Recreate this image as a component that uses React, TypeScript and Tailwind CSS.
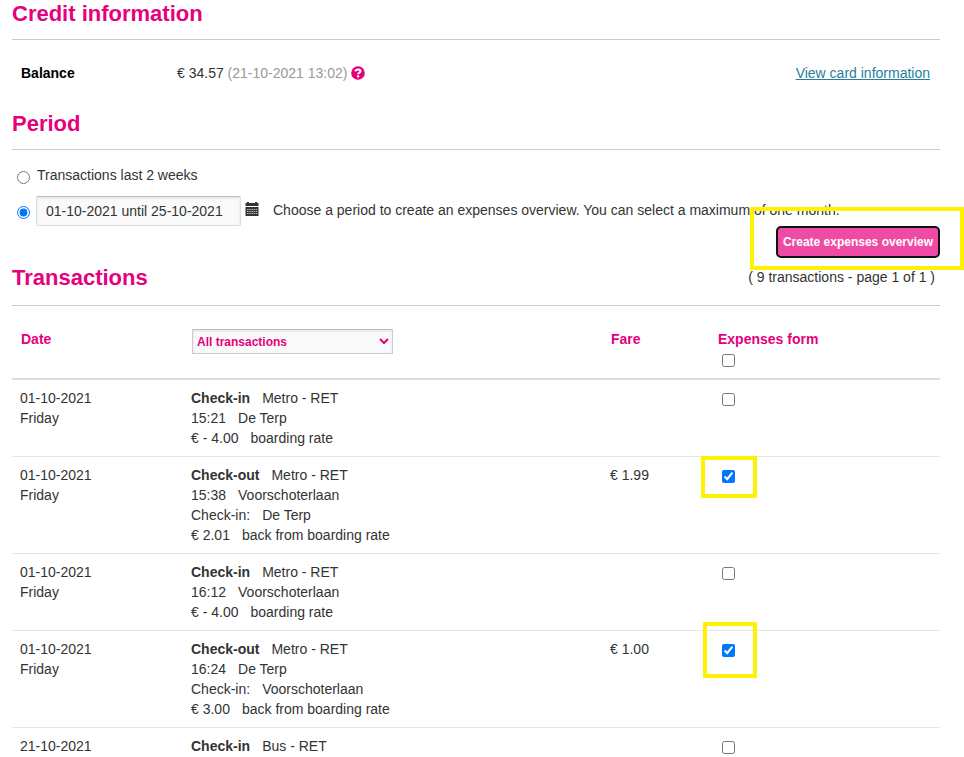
import { useState } from 'react';

type Transaction = {
  date: string;
  day?: string;
  kind: string;
  carrier: string;
  lines: [string, string][];
  fare?: string;
  mark?: string;
};

const transactions: Transaction[] = [
  {
    date: '01-10-2021',
    day: 'Friday',
    kind: 'Check-in',
    carrier: 'Metro - RET',
    lines: [['15:21', 'De Terp'], ['€ - 4.00', 'boarding rate']],
  },
  {
    date: '01-10-2021',
    day: 'Friday',
    kind: 'Check-out',
    carrier: 'Metro - RET',
    lines: [['15:38', 'Voorschoterlaan'], ['Check-in:', 'De Terp'], ['€ 2.01', 'back from boarding rate']],
    fare: '€ 1.99',
    mark: '-top-[14px] -bottom-[15px] -left-[21px] -right-[22px]',
  },
  {
    date: '01-10-2021',
    day: 'Friday',
    kind: 'Check-in',
    carrier: 'Metro - RET',
    lines: [['16:12', 'Voorschoterlaan'], ['€ - 4.00', 'boarding rate']],
  },
  {
    date: '01-10-2021',
    day: 'Friday',
    kind: 'Check-out',
    carrier: 'Metro - RET',
    lines: [['16:24', 'De Terp'], ['Check-in:', 'Voorschoterlaan'], ['€ 3.00', 'back from boarding rate']],
    fare: '€ 1.00',
    mark: '-top-[22px] -bottom-[21px] -left-[19px] -right-[22px]',
  },
  { date: '21-10-2021', kind: 'Check-in', carrier: 'Bus - RET', lines: [] },
];

function Marker({ className }: { className: string }) {
  return <span className={`absolute border-4 border-[#fff200] pointer-events-none ${className}`} />;
}

function HelpIcon() {
  return (
    <svg viewBox="0 0 14 14" className="w-[14px] h-[14px]" role="img" aria-label="Help">
      <circle cx="7" cy="7" r="6.8" fill="#e5007d" />
      <path d="M4.4 5.4C4.6 3.900 5.600 3.400 7 3.400c1.600 0 2.500.7 2.500 1.800 0 1.600-2.400 1.500-2.400 3.100" fill="none" stroke="#fff" strokeWidth="2" />
      <path d="M6 9.300h2.200v2.100H6z" fill="#fff" />
    </svg>
  );
}

function CalendarIcon() {
  return (
    <svg viewBox="0 0 14 14" className="w-[14px] h-[14px]" aria-hidden="true">
      <path d="M.5 1H2V0h2v1h6V0h2v1h1.500v3H.5z" fill="#333" />
      <path d="M.5 5h13v9H.5z" fill="#333" />
      <path d="M2 7.500h10.500M2 9.500h10.500M2 11.500h10.500" stroke="#fff" strokeOpacity=".75" strokeWidth=".9" strokeDasharray="1.500 .7" />
    </svg>
  );
}

export default function App() {
  const [period, setPeriod] = useState('custom');
  const [selected, setSelected] = useState<number[]>([1, 3]);
  const allSelected = selected.length === transactions.length;

  const toggle = (i: number) =>
    setSelected(s => (s.includes(i) ? s.filter(n => n !== i) : [...s, i]));

  return (
    <main className="bg-white pl-3 pr-6 font-['Liberation_Sans',Arial,sans-serif] text-[14px] leading-5 text-[#333]">
      {/* Credit information */}
      <section>
        <h2 className="border-b border-[#ccc] pb-[11px] text-[22px] leading-7 font-bold text-[#e5007d]">Credit information</h2>
        <div className="flex items-center pt-[23px] pb-[27px] pl-[9px] pr-[10px]">
          <strong className="w-[156px] text-black">Balance</strong>
          <span>€ 34.57 <span className="text-[#999]">(21-10-2021 13:02)</span></span>
          <button type="button" className="ml-1"><HelpIcon /></button>
          <a href="#card" className="ml-auto text-[#26809c] underline">View card information</a>
        </div>
      </section>

      {/* Period */}
      <section>
        <h2 className="border-b border-[#ccc] pb-[11px] text-[22px] leading-7 font-bold text-[#e5007d]">Period</h2>
        <div className="flex items-center gap-[7px] pt-[15px] pl-[5px]">
          <input id="last-weeks" type="radio" name="period" className="mt-1 h-[13px] w-[13px]" checked={period === 'weeks'} onChange={() => setPeriod('weeks')} />
          <label htmlFor="last-weeks">Transactions last 2 weeks</label>
        </div>
        <div className="flex items-center pt-[11px] pl-[5px]">
          <input type="radio" name="period" aria-label="Choose a period" className="mt-[2px] h-[13px] w-[13px]" checked={period === 'custom'} onChange={() => setPeriod('custom')} />
          <input
            type="text"
            aria-label="Period"
            defaultValue="01-10-2021 until 25-10-2021"
            className="ml-[6px] h-[30px] w-[205px] rounded-[2px] border border-[#ddd] border-t-[#bbb] bg-[#fafafa] px-[9px] shadow-[inset_0_1px_3px_rgba(0,0,0,0.1)]"
          />
          <button type="button" aria-label="Open calendar" className="mb-1 ml-1"><CalendarIcon /></button>
          <p className="mb-[2px] ml-[14px]">Choose a period to create an expenses overview. You can select a maximum of one month.</p>
        </div>
        <div className="flex justify-end">
          <div className="relative">
            <button type="button" className="block h-8 rounded-[5px] border-2 border-[#111] bg-[#ef4ba5] px-[5px] text-[12px] font-bold text-white">
              Create expenses overview
            </button>
            <Marker className="-top-[19px] -bottom-3 -left-[26px] -right-6" />
          </div>
        </div>
      </section>

      {/* Transactions */}
      <section>
        <div className="flex items-start justify-between border-b border-[#ccc] pt-[6px] pb-[13px] pr-[5px]">
          <h2 className="text-[22px] leading-7 font-bold text-[#e5007d]">Transactions</h2>
          <span className="mt-[3px]">( 9 transactions - page 1 of 1 )</span>
        </div>
        <table className="w-full table-fixed border-collapse text-left">
          <colgroup>
            <col className="w-[171px]" />
            <col />
            <col className="w-[108px]" />
            <col className="w-[230px]" />
          </colgroup>
          <thead>
            <tr className="border-b-2 border-[#ddd] align-top text-[#e5007d]">
              <th className="pt-[23px] pl-[9px] font-bold">Date</th>
              <th className="pt-[23px] pl-[9px]">
                <select aria-label="Transaction type" className="block h-[25px] w-[201px] rounded-[1px] border border-[#ccc] border-t-[#bbb] bg-[#fafafa] text-[12px] font-bold text-[#e5007d] shadow-[inset_0_1px_3px_rgba(0,0,0,0.1)]">
                  <option>All transactions</option>
                </select>
              </th>
              <th className="pt-[23px] pl-[9px] font-bold">Fare</th>
              <th className="pt-[23px] pb-[11px] pl-2 font-bold">
                <label htmlFor="select-all" className="block">Expenses form</label>
                <input
                  id="select-all"
                  type="checkbox"
                  className="mt-[5px] ml-1 block h-[13px] w-[13px]"
                  checked={allSelected}
                  onChange={() => setSelected(allSelected ? [] : transactions.map((_, i) => i))}
                />
              </th>
            </tr>
          </thead>
          <tbody>
            {transactions.map((t, i) => (
              <tr key={i} className="border-b border-[#e5e5e5] align-top last:border-b-0">
                <td className="pt-2 pl-2">
                  <div>{t.date}</div>
                  <div>{t.day}</div>
                </td>
                <td className={`pt-2 pl-2 ${t.day ? 'pb-2' : ''}`}>
                  <div className="flex gap-3"><strong>{t.kind}</strong><span>{t.carrier}</span></div>
                  {t.lines.map(([label, value]) => (
                    <div key={label} className="flex gap-3"><span>{label}</span><span>{value}</span></div>
                  ))}
                </td>
                <td className="pt-2 pl-2">{t.fare}</td>
                <td className="pt-[13px] pl-3">
                  <div className="relative w-[13px]">
                    <input
                      type="checkbox"
                      aria-label={`Add ${t.kind} ${t.date} to expenses form`}
                      className="block h-[13px] w-[13px]"
                      checked={selected.includes(i)}
                      onChange={() => toggle(i)}
                    />
                    {t.mark && <Marker className={t.mark} />}
                  </div>
                </td>
              </tr>
            ))}
          </tbody>
        </table>
      </section>
    </main>
  );
}
